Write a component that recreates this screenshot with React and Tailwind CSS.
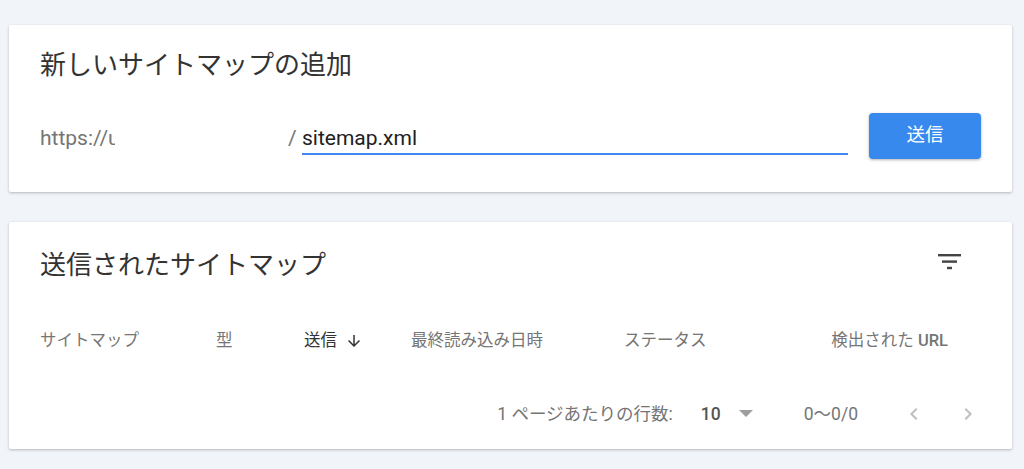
import React from 'react';

const FONT = { fontFamily: 'Roboto, "Noto Sans CJK JP", sans-serif' };

const FilterIcon = () => (
  <svg width="24" height="16" viewBox="0 0 24 16" className="block">
    <rect x="0" y="0" width="23" height="2.4" fill="#444" />
    <rect x="4" y="6.4" width="15" height="2.4" fill="#444" />
    <rect x="9" y="12.8" width="5" height="2.4" fill="#444" />
  </svg>
);

const Chevron = ({ dir }) => (
  <svg width="24" height="24" viewBox="0 0 24 24" className="block">
    <path
      d={dir === 'left' ? 'M15.4 7.4 14 6l-6 6 6 6 1.4-1.4L10.8 12z' : 'M8.6 7.4 10 6l6 6-6 6-1.4-1.4 4.6-4.6z'}
      fill="#bdbdbd"
    />
  </svg>
);

const App = () => {
  return (
    <div className="min-h-[469px] w-[1024px] bg-[#f1f4f9] pt-[25px] px-[9px] pr-[12px]" style={FONT}>
      {/* add sitemap card */}
      <div className="bg-white rounded-[2px] shadow-[0_1px_3px_rgba(0,0,0,0.25)] px-[31px] pt-[24px] pb-[33px]">
        <h2 className="text-[26px] leading-[32px] text-[#333] font-normal">新しいサイトマップの追加</h2>
        <div className="flex items-center mt-[32px] h-[46px]">
          <div className="w-[248px] flex items-center pt-[6px]">
            <span className="w-[75px] overflow-hidden whitespace-nowrap text-[21px] text-[#757575]">https://u</span>
          </div>
          <span className="text-[21px] text-[#757575] w-[14px] pt-[6px]">/</span>
          <div className="flex-1 h-[46px] flex flex-col justify-end">
            <div className="text-[21px] text-[#212121] leading-[28px] pb-[1px]">sitemap.xml</div>
            <div className="h-[2px] bg-[#4285f4] mb-[4px]" />
          </div>
          <button className="ml-[21px] w-[112px] h-[46px] rounded-[4px] bg-[#3889ee] text-white text-[18.5px] shadow-[0_1px_3px_rgba(0,0,0,0.3)]">
            送信
          </button>
        </div>
      </div>

      {/* submitted sitemaps card */}
      <div className="mt-[30px] bg-white rounded-[2px] shadow-[0_1px_3px_rgba(0,0,0,0.25)] h-[227px] flex flex-col">
        <div className="flex items-center justify-between pl-[31px] pr-[50px] pt-[24px] h-[80px]">
          <h2 className="text-[26px] leading-[32px] text-[#333] font-normal -mt-[18px]">送信されたサイトマップ</h2>
          <div className="-mt-[24px]"><FilterIcon /></div>
        </div>
        <div className="flex items-center pl-[31px] pr-[64px] h-[38px] mt-[20px] text-[16.5px] text-[#757575]">
          <div className="w-[176px]">サイトマップ</div>
          <div className="w-[88px]">型</div>
          <div className="w-[107px] flex items-center text-[#333]">
            送信
            <svg width="18" height="18" viewBox="0 0 24 24" className="ml-[8px]">
              <path d="M20 12l-1.41-1.41L13 16.17V4h-2v12.17l-5.58-5.59L4 12l8 8 8-8z" fill="#333" />
            </svg>
          </div>
          <div className="w-[213px]">最終読み込み日時</div>
          <div className="flex-1">ステータス</div>
          <div>検出された <span className="font-medium">URL</span></div>
        </div>
        <div className="flex items-center justify-end pr-[32px] h-[40px] mt-[34px] text-[17.5px] text-[#757575]">
          <span>1 ページあたりの行数:</span>
          <span className="ml-[28px] text-[#555] font-medium">10</span>
          <svg width="14" height="8" viewBox="0 0 14 8" className="ml-[18px]">
            <path d="M0 0h14L7 7z" fill="#9e9e9e" />
          </svg>
          <span className="ml-[51px]">0〜0/0</span>
          <div className="ml-[44px]"><Chevron dir="left" /></div>
          <div className="ml-[30px]"><Chevron dir="right" /></div>
        </div>
      </div>
    </div>
  );
};

export default App;
